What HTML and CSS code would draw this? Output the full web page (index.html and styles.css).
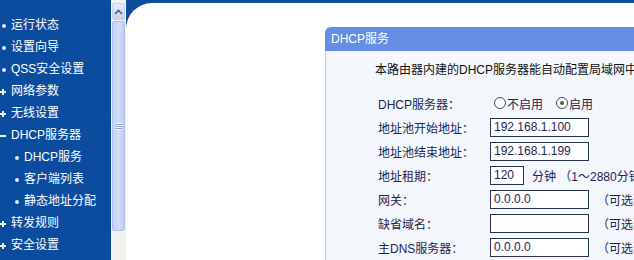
FILE: index.html
```html
<!DOCTYPE html>
<html>
<head>
<meta name="viewport" content="width=device-width, initial-scale=1">
<link rel="stylesheet" href="styles.css">
</head>
<body>

<div class="menu">
  <ul class="nav">
    <li class="dot">运行状态</li>
    <li class="dot">设置向导</li>
    <li class="dot">QSS安全设置</li>
    <li class="plus">网络参数</li>
    <li class="plus">无线设置</li>
    <li class="minus">DHCP服务器</li>
    <li class="dot sub">DHCP服务</li>
    <li class="dot sub">客户端列表</li>
    <li class="dot sub">静态地址分配</li>
    <li class="plus">转发规则</li>
    <li class="plus">安全设置</li>
  </ul>
  <div class="scrollbar">
    <div class="scroll-up">
      <svg width="9" height="6" viewBox="0 0 9 6"><path d="M1 5 L4.5 1.5 L8 5" fill="none" stroke="#4d6185" stroke-width="1.6"/></svg>
    </div>
    <div class="thumb"><span class="grip"></span></div>
  </div>
</div>

<div class="main">
  <div class="panel">
    <div class="panel-head">DHCP服务</div>
    <div class="panel-body">
      <p class="intro">本路由器内建的DHCP服务器能自动配置局域网中各计算机的TCP/IP协议。</p>
      <div class="row">
        <label>DHCP服务器：</label>
        <span class="radio"></span><span class="opt">不启用</span>
        <span class="radio on"></span><span class="opt">启用</span>
      </div>
      <div class="row">
        <label>地址池开始地址：</label>
        <input type="text" value="192.168.1.100">
      </div>
      <div class="row">
        <label>地址池结束地址：</label>
        <input type="text" value="192.168.1.199">
      </div>
      <div class="row">
        <label>地址租期：</label>
        <input type="text" class="short" value="120">
        <span class="hint">分钟 （1～2880分钟，缺省为120分钟）</span>
      </div>
      <div class="row">
        <label>网关：</label>
        <input type="text" value="0.0.0.0">
        <span class="note">（可选）</span>
      </div>
      <div class="row">
        <label>缺省域名：</label>
        <input type="text" value="">
        <span class="note">（可选）</span>
      </div>
      <div class="row">
        <label>主DNS服务器：</label>
        <input type="text" value="0.0.0.0">
        <span class="note">（可选）</span>
      </div>
    </div>
  </div>
</div>

</body>
</html>
```

FILE: styles.css
```css
body {
    margin: 0;
    height: 260px;
    overflow: hidden;
    display: flex;
    background-color: #0b4c9e;
    font-family: "Liberation Sans", "Noto Sans CJK SC", sans-serif;
    font-size: 12px;
}

/* left frame */
.menu {
    display: flex;
    width: 126px;
    flex-shrink: 0;
}

.nav {
    list-style: none;
    margin: 0;
    padding: 14px 0 0 0;
    width: 111px;
    color: #fff;
}

.nav li {
    height: 22px;
    line-height: 22px;
    padding-left: 11px;
    position: relative;
    white-space: nowrap;
}

.nav li.sub {
    padding-left: 24px;
}

.nav li.dot:before {
    content: "";
    position: absolute;
    left: 2px;
    top: 10px;
    width: 4px;
    height: 4px;
    border-radius: 50%;
    background-color: #dfe9f5;
}

.nav li.sub:before {
    left: 15px;
}

.nav li.plus:before,
.nav li.minus:before {
    content: "";
    position: absolute;
    left: 0;
    top: 11px;
    width: 6px;
    height: 2px;
    background-color: #eaf3e0;
}

.nav li.plus:after {
    content: "";
    position: absolute;
    left: 2px;
    top: 9px;
    width: 2px;
    height: 6px;
    background-color: #eaf3e0;
}

.scrollbar {
    width: 15px;
    background-color: #f3f3ee;
    padding-top: 3px;
}

.scroll-up {
    height: 15px;
    margin: 0 1px;
    border: 1px solid #c3d0ee;
    border-radius: 2px;
    background: linear-gradient(#e4ebfb, #c5d3f5);
    display: flex;
    align-items: center;
    justify-content: center;
}

.thumb {
    height: 208px;
    margin: 1px 1px 0 1px;
    border: 1px solid #afc0ea;
    border-radius: 2px;
    background: linear-gradient(to right, #c4d1f6, #d3ddf8 60%, #bccbf1);
    display: flex;
    align-items: center;
    justify-content: center;
}

.grip {
    width: 7px;
    height: 7px;
    background: repeating-linear-gradient(#eef2fd 0 1px, #8fa3d8 1px 2px);
}

/* right frame */
.main {
    flex: 1;
    margin-top: 3px;
    background-color: #fff;
    border-top-left-radius: 26px;
    overflow: hidden;
    padding: 24px 0 0 199px;
}

.panel {
    width: 520px;
}

.panel-head {
    height: 24px;
    line-height: 24px;
    padding-left: 6px;
    color: #fff;
    background-color: #648de3;
    border-top-left-radius: 6px;
}

.panel-body {
    background-color: #f4f7fc;
    border-left: 1px solid #e8c59a;
    padding: 9px 0 0 49px;
    height: 220px;
    color: #1e2552;
}

.intro {
    margin: 0 0 14px 0;
    color: #111;
    white-space: nowrap;
}

.row {
    display: flex;
    align-items: center;
    height: 24px;
    padding-left: 3px;
    white-space: nowrap;
}

.row label {
    width: 112px;
    flex-shrink: 0;
}

.row input {
    width: 99px;
    height: 19px;
    box-sizing: border-box;
    border: 1px solid #27324f;
    padding: 0 3px;
    margin: 0;
    font-family: "Liberation Sans", sans-serif;
    font-size: 12px;
    color: #1e2552;
    background-color: #fff;
}

.row input.short {
    width: 34px;
}

.radio {
    width: 12px;
    height: 12px;
    box-sizing: border-box;
    border: 1px solid #3c4866;
    border-radius: 50%;
    margin: 0 1px 0 4px;
    background-color: #fff;
    position: relative;
}

.radio.on:after {
    content: "";
    position: absolute;
    left: 3px;
    top: 3px;
    width: 4px;
    height: 4px;
    border-radius: 50%;
    background-color: #2f6a2a;
}

.opt {
    margin-right: 9px;
}

.hint {
    margin-left: 8px;
}

.note {
    margin-left: 8px;
}
```
